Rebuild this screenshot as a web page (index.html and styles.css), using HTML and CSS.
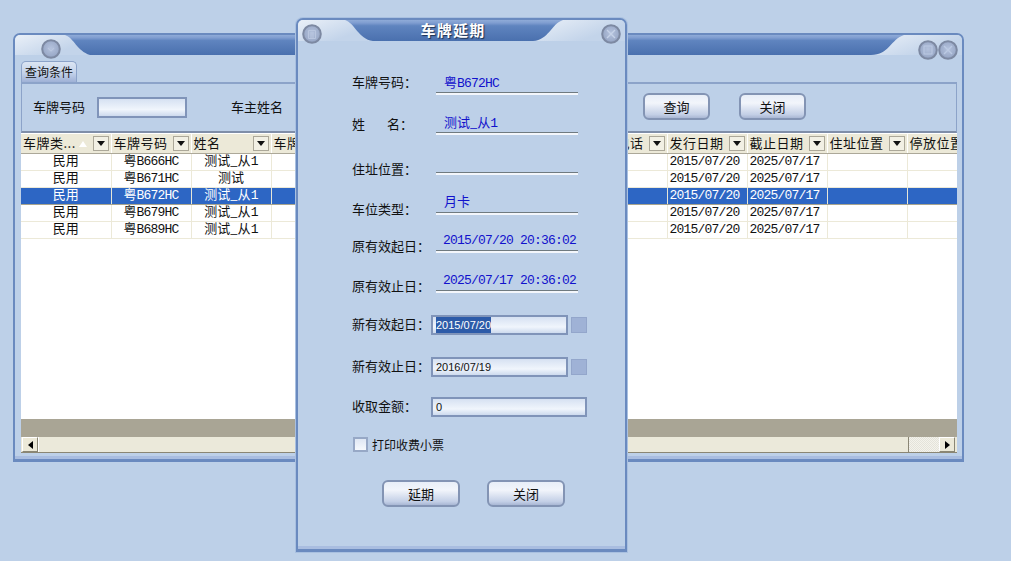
FILE: index.html
```html
<!DOCTYPE html>
<html lang="zh-CN">
<head>
<meta charset="utf-8">
<title>车牌延期</title>
<link rel="stylesheet" href="styles.css">
</head>
<body>
<svg class="defs" width="0" height="0" aria-hidden="true">
  <defs>
    <linearGradient id="band" x1="0" y1="0" x2="0" y2="1">
      <stop offset="0" stop-color="#8fabd8"/>
      <stop offset=".14" stop-color="#7f9dd0"/>
      <stop offset=".28" stop-color="#5f84bf"/>
      <stop offset="1" stop-color="#4a70ae"/>
    </linearGradient>
    <radialGradient id="orb" cx=".5" cy=".45" r=".6">
      <stop offset="0" stop-color="#b4c2dd"/>
      <stop offset=".7" stop-color="#9dacca"/>
      <stop offset="1" stop-color="#8796b6"/>
    </radialGradient>
    <symbol id="ring" viewBox="0 0 20 20">
      <circle cx="10" cy="10" r="8.8" fill="url(#orb)" stroke="#7d89a2" stroke-width="2"/>
    </symbol>
  </defs>
</svg>

<section class="window main">
  <header class="titlebar">
    <div class="cap cap-left">
      <svg class="cap-shape" viewBox="0 0 75 20" preserveAspectRatio="none"><path d="M50 0C59 3 62 16 75 20V0Z" fill="url(#band)"/></svg>
      <svg class="orb orb-main-left" viewBox="0 0 20 20"><use href="#ring"/><path d="M7 9l3 3 3-3" fill="none" stroke="#b9c6df" stroke-width="1.2"/></svg>
    </div>
    <div class="band"></div>
    <div class="cap cap-right">
      <svg class="cap-shape" viewBox="0 0 91 20" preserveAspectRatio="none"><path d="M0 20C18 20 20 4 33 0H0Z" fill="url(#band)"/></svg>
      <svg class="orb orb-main-min" viewBox="0 0 20 20"><use href="#ring"/><rect x="6" y="6" width="8" height="8" fill="none" stroke="#bccae3"/></svg>
      <svg class="orb orb-main-close" viewBox="0 0 20 20"><use href="#ring"/><path d="M6 6l8 8M14 6l-8 8" stroke="#bccae3" stroke-width="1.4"/></svg>
    </div>
  </header>
  <div class="main-body">
    <div class="tabs"><div class="tab">查询条件</div></div>
    <div class="query">
      <span class="zh query-label">车牌号码</span>
      <div class="field query-input"></div>
      <span class="zh query-label owner">车主姓名</span>
      <div class="field query-input"></div>
      <div class="query-actions">
        <button class="btn btn-query zh">查询</button>
        <button class="btn btn-query zh">关闭</button>
      </div>
    </div>
    <div class="grid">
      <table class="table">
        <colgroup>
          <col class="c90"><col class="c80"><col class="c80"><col class="c80"><col class="c80"><col class="c80"><col class="c76"><col class="c80"><col class="c80"><col class="c80"><col class="c80"><col class="c80">
        </colgroup>
        <thead>
          <tr>
            <th><div class="th"><span>车牌类...</span><i class="sort"></i><i class="drop"></i></div></th>
            <th><div class="th"><span>车牌号码</span><i class="drop"></i></div></th>
            <th><div class="th"><span>姓名</span><i class="drop"></i></div></th>
            <th><div class="th"><span>车牌</span><i class="drop"></i></div></th>
            <th></th><th></th><th></th>
            <th><div class="th"><span>联系电话</span><i class="drop"></i></div></th>
            <th><div class="th"><span>发行日期</span><i class="drop"></i></div></th>
            <th><div class="th"><span>截止日期</span><i class="drop"></i></div></th>
            <th><div class="th"><span>住址位置</span><i class="drop"></i></div></th>
            <th><div class="th"><span>停放位置</span></div></th>
          </tr>
        </thead>
        <tbody>
          <tr><td><span class="zh">民用</span></td><td><span class="zh">粤</span>B666HC</td><td><span class="zh">测试_从</span>1</td><td></td><td></td><td></td><td></td><td></td><td class="dt">2015/07/20</td><td class="dt">2025/07/17</td><td></td><td></td></tr>
          <tr><td><span class="zh">民用</span></td><td><span class="zh">粤</span>B671HC</td><td><span class="zh">测试</span></td><td></td><td></td><td></td><td></td><td></td><td class="dt">2015/07/20</td><td class="dt">2025/07/17</td><td></td><td></td></tr>
          <tr class="selected"><td><span class="zh">民用</span></td><td><span class="zh">粤</span>B672HC</td><td><span class="zh">测试_从</span>1</td><td></td><td></td><td></td><td></td><td></td><td class="dt">2015/07/20</td><td class="dt">2025/07/17</td><td></td><td></td></tr>
          <tr><td><span class="zh">民用</span></td><td><span class="zh">粤</span>B679HC</td><td><span class="zh">测试_从</span>1</td><td></td><td></td><td></td><td></td><td></td><td class="dt">2015/07/20</td><td class="dt">2025/07/17</td><td></td><td></td></tr>
          <tr><td><span class="zh">民用</span></td><td><span class="zh">粤</span>B689HC</td><td><span class="zh">测试_从</span>1</td><td></td><td></td><td></td><td></td><td></td><td class="dt">2015/07/20</td><td class="dt">2025/07/17</td><td></td><td></td></tr>
        </tbody>
      </table>
    </div>
    <div class="grid-footer"></div>
    <div class="scrollbar">
      <div class="sb-btn"><i class="arrow-left"></i></div>
      <div class="sb-thumb"></div>
      <div class="sb-track"></div>
      <div class="sb-btn"><i class="arrow-right"></i></div>
    </div>
  </div>
</section>

<section class="window dialog">
  <header class="titlebar">
    <div class="cap cap-left">
      <svg class="cap-shape" viewBox="0 0 75 21" preserveAspectRatio="none"><path d="M47 0C57 3 60 19 75 21V0Z" fill="url(#band)"/></svg>
      <svg class="orb orb-dlg-left" viewBox="0 0 20 20"><use href="#ring"/><path d="M6.5 6.5h7v8h-7zM8 9h4M8 11h4M8 13h4" fill="none" stroke="#b9c6df"/></svg>
    </div>
    <div class="band dialog-title zh">车牌延期</div>
    <div class="cap cap-right">
      <svg class="cap-shape" viewBox="0 0 92 21" preserveAspectRatio="none"><path d="M0 21C16 20 18 4 30 0H0Z" fill="url(#band)"/></svg>
      <svg class="orb orb-dlg-close" viewBox="0 0 20 20"><use href="#ring"/><path d="M6 6l8 8M14 6l-8 8" stroke="#c6d2e8" stroke-width="1.4"/></svg>
    </div>
  </header>
  <form class="form">
    <div class="info h40"><span class="lbl lift11 zh">车牌号码：</span><span class="val"><span class="zh">粤</span>B672HC</span></div>
    <div class="info h40"><span class="lbl lift10 zh">姓<span class="gap">名</span>：</span><span class="val"><span class="zh">测试_从</span>1</span></div>
    <div class="info h40"><span class="lbl lift5 zh">住址位置：</span><span class="val"></span></div>
    <div class="info h40"><span class="lbl lift5 zh">车位类型：</span><span class="val zh val-low">月卡</span></div>
    <div class="info h38"><span class="lbl lift6 zh">原有效起日：</span><span class="val date">2015/07/20 20:36:02</span></div>
    <div class="info h40"><span class="lbl lift6 zh">原有效止日：</span><span class="val date">2025/07/17 20:36:02</span></div>

    <div class="entry m23"><span class="lbl zh">新有效起日：</span><div class="field input"><span class="sel">2015/07/20</span></div><i class="pick"></i></div>
    <div class="entry m22"><span class="lbl zh">新有效止日：</span><div class="field input">2016/07/19</div><i class="pick"></i></div>
    <div class="entry m20"><span class="lbl zh">收取金额：</span><div class="field input wide">0</div></div>
    <label class="check"><i class="box"></i>打印收费小票</label>
    <div class="actions">
      <button class="btn btn-dlg zh" type="button">延期</button>
      <button class="btn btn-dlg zh" type="button">关闭</button>
    </div>
  </form>
</section>
</body>
</html>
```
FILE: styles.css
```css
* { box-sizing: border-box; }
html, body { margin: 0; height: 100%; }
body {
  background: #bdd0e8;
  color: #111;
  font-family: "Liberation Mono", "Noto Sans CJK SC", monospace;
  font-size: 13px;
  letter-spacing: -.8px;
  overflow: hidden;
}
.defs { position: absolute; }
.zh {
  font-family: "Noto Sans CJK SC", "Liberation Sans", sans-serif;
  font-size: 13px;
  letter-spacing: 0;
}

/* windows on the desktop */
.window {
  position: absolute;
  display: flex;
  flex-direction: column;
  background: #bdd0e8;
  border: 2px solid #6a8abf;
  border-bottom-width: 3px;
  border-radius: 7px 7px 0 0;
  overflow: hidden;
}
.main { left: 13px; top: 33px; width: 951px; height: 429px; box-shadow: inset 0 -3px 0 #a9bde0; }
.dialog {
  left: 296px; top: 18px; width: 331px; height: 534px;
  box-shadow: 0 0 0 1px #a9c0e0, inset 0 -3px 0 #a9bde0;
}

/* title bars */
.titlebar { display: flex; height: 20px; flex: none; }
.dialog .titlebar { height: 21px; }
.band { flex: 1; background: linear-gradient(#8fabd8, #7f9dd0 14%, #5f84bf 28%, #4a70ae); }
.cap { position: relative; flex: none; background: linear-gradient(160deg, #eaf0f8, #c3d4ea 70%); }
.cap-shape { display: block; width: 100%; height: 100%; }
.main .cap-left { width: 75px; }
.main .cap-right { width: 91px; }
.dialog .cap-left { width: 75px; }
.dialog .cap-right { width: 92px; }
.orb { position: absolute; width: 20px; height: 20px; }
.orb-main-left { left: 26px; top: 4px; }
.orb-main-min { left: 47px; top: 5px; }
.orb-main-close { left: 67px; top: 5px; }
.orb-dlg-left { left: 4px; top: 4px; }
.orb-dlg-close { left: 68px; top: 4px; }
.dialog-title {
  color: #fff;
  font-size: 15px;
  font-weight: 700;
  letter-spacing: 1.2px;
  line-height: 19px;
  text-align: center;
  text-shadow: 1px 1px 1px #1d3050;
}

/* main window */
.main-body {
  flex: 1;
  min-height: 0;
  display: flex;
  flex-direction: column;
  padding: 6px 5px 6px 6px;
}
.tabs { height: 21px; flex: none; display: flex; }
.tab {
  width: 56px;
  height: 21px;
  padding-left: 3px;
  font-family: "Noto Sans CJK SC", sans-serif;
  font-size: 12px;
  letter-spacing: 0;
  line-height: 19px;
  white-space: nowrap;
  border: 1px solid #8ca3c9;
  border-bottom: 0;
  border-radius: 5px 5px 0 0;
  background: linear-gradient(#dbe5f3, #c3d2ea 55%, #9fb1d6);
}
.query {
  flex: none;
  height: 51px;
  display: flex;
  align-items: center;
  padding-left: 11px;
  border: 2px solid #8ca3c9;
  border-left-width: 1px;
  border-right-width: 1px;
  border-bottom-color: #7f8ea8;
  background: #bdd0e8;
}
.query-label { width: 52px; white-space: nowrap; margin-bottom: 2px; }
.query-input { width: 90px; height: 21px; margin-left: 12px; flex: none; }
.owner { margin-left: 44px; }
.query-actions { margin-left: auto; margin-bottom: 3px; display: flex; gap: 29px; padding-right: 150px; }

.field {
  border: 2px solid #8094b9;
  background: linear-gradient(#d6e1f2, #f0f5fc 62%, #cddaee);
}

.btn {
  padding: 0;
  color: #111;
  border: 2px solid #8394b4;
  border-radius: 6px;
  background: linear-gradient(#e8eef8, #f2f5fb 35%, #c3cfe6 85%, #a9b7d4);
  line-height: 1;
}
.btn-query { width: 67px; height: 27px; }
.btn-dlg { width: 78px; height: 27px; }

/* data grid */
.grid { flex: 1; min-height: 0; overflow: hidden; background: #fff; }
.table { width: 966px; table-layout: fixed; border-collapse: collapse; }
.c90 { width: 90px; }
.c80 { width: 80px; }
.c76 { width: 76px; }
.table th {
  height: 20px;
  padding: 0;
  font-weight: 400;
  text-align: left;
  background: #ece9d8;
  border-top: 1px solid #fff;
  border-right: 1px solid #fff;
  border-bottom: 1px solid #aca899;
}
.th {
  display: flex;
  align-items: center;
  height: 18px;
  padding: 0 1px 0 2px;
  white-space: nowrap;
  font-family: "Noto Sans CJK SC", sans-serif;
  font-size: 13px;
  letter-spacing: .5px;
  line-height: 18px;
}
.th span { flex: 1; margin-bottom: 2px; }
.sort {
  width: 0; height: 0;
  margin-right: 6px;
  border: 4px solid transparent;
  border-top: 0;
  border-bottom: 6px solid #fff;
}
.drop {
  position: relative;
  flex: none;
  width: 16px; height: 15px;
  margin-right: 1px;
  border: 1px solid #aca899;
  background: #f2f0e4;
}
.drop::after {
  content: "";
  position: absolute;
  left: 3px; top: 4px;
  border: 4px solid transparent;
  border-top: 5px solid #111;
  border-bottom: 0;
}
.table td {
  height: 17px;
  padding: 0;
  text-align: center;
  line-height: 16px;
  white-space: nowrap;
  border-right: 1px solid #ece9d8;
  border-bottom: 1px solid #ece9d8;
  background: #fff;
}
.table td .zh { line-height: 12px; }
.table td.dt { text-align: left; padding-left: 2px; }
.selected td {
  color: #fff;
  background: #2d66c4;
  border-top: 1px solid #a8a48e;
  border-bottom: 1px solid #a8a48e;
  border-right-color: #e6e6d8;
}
.grid-footer { flex: none; height: 18px; background: #a9a595; }
.scrollbar {
  flex: none;
  display: flex;
  height: 16px;
  padding: 0 2px 0 1px;
  background: #ece9d8;
  border-bottom: 1px solid #8a8674;
}
.sb-btn {
  width: 16px;
  flex: none;
  display: flex;
  align-items: center;
  justify-content: center;
  border: 1px solid #fff;
  border-right-color: #8a8674;
  border-bottom-color: #8a8674;
  background: #ece9d8;
}
.sb-thumb {
  flex: none;
  width: 871px;
  background: #ebe9da;
  border-left: 1px solid #fff;
  border-right: 1px solid #8a8674;
}
.sb-track {
  flex: 1;
  background: repeating-conic-gradient(#f4f3ec 0 25%, #e4e3da 0 50%) 0 0 / 2px 2px;
}
.arrow-left { border: 4px solid transparent; border-left: 0; border-right: 5px solid #000; }
.arrow-right { border: 4px solid transparent; border-right: 0; border-left: 5px solid #000; }

/* dialog form */
.form { flex: 1; display: flex; flex-direction: column; padding: 13px 0 0 54px; }
.info { display: flex; align-items: flex-end; flex: none; }
.h40 { height: 40px; }
.h38 { height: 38px; }
.lbl { width: 84px; flex: none; line-height: 14px; white-space: nowrap; }
.gap { margin-left: 22px; }
.lift11 { padding-bottom: 5px; }
.lift10 { padding-bottom: 3px; }
.lift5 { margin-bottom: -2px; }
.lift6 { margin-bottom: -1px; }
.val {
  width: 142px;
  height: 25px;
  padding: 4px 0 0 8px;
  color: #1111cc;
  line-height: 18px;
  white-space: nowrap;
  border-bottom: 1px solid #f3f6fb;
  box-shadow: 0 1px 0 #f3f6fb, inset 0 -1px 0 #6f7a80;
}
.val-low { padding-top: 3px; }
.date { padding: 5px 0 0 7px; }
.entry { display: flex; align-items: center; flex: none; height: 20px; }
.entry .lbl { width: 79px; margin-bottom: 2px; }
.m23 { margin-top: 23px; }
.m22 { margin-top: 22px; }
.m20 { margin-top: 20px; }
.input {
  width: 137px;
  height: 20px;
  padding-left: 3px;
  font-family: "Liberation Sans", sans-serif;
  font-size: 11px;
  letter-spacing: 0;
  line-height: 16px;
}
.input.wide { width: 156px; }
.sel { display: inline-block; background: #2d5ba8; color: #fff; }
.pick {
  width: 16px; height: 16px;
  margin-left: 3px;
  background: #9fb2d6;
  border: 1px solid #b4c4e0;
  outline: 1px solid #93a6cb;
  outline-offset: -1px;
}
.check {
  display: flex;
  align-items: center;
  flex: none;
  margin-top: 20px;
  height: 15px;
  padding-left: 1px;
  font-family: "Noto Sans CJK SC", sans-serif;
  font-size: 12px;
  letter-spacing: 0;
  line-height: 13px;
}
.box {
  width: 15px; height: 15px;
  margin-right: 4px;
  border: 2px solid #97a8c6;
  background: linear-gradient(#dfe7f4, #f6f9fd);
}
.actions { display: flex; gap: 27px; margin-top: 28px; padding-left: 30px; }
```
